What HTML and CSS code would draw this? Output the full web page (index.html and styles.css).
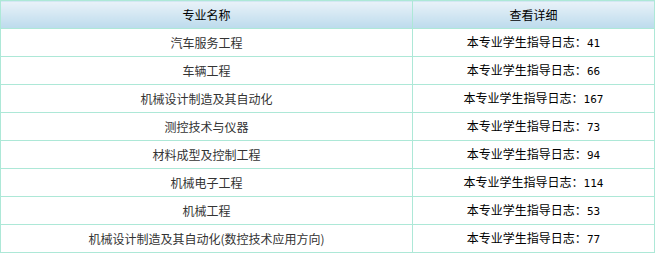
FILE: index.html
```html
<!DOCTYPE html>
<html lang="zh-CN">
<head>
<meta charset="utf-8">
<title>专业指导日志</title>
<link rel="stylesheet" href="styles.css">
</head>
<body>
<table class="grid">
  <colgroup><col class="c-name"><col class="c-detail"></colgroup>
  <thead>
    <tr><th>专业名称</th><th>查看详细</th></tr>
  </thead>
  <tbody>
    <tr><td class="name">汽车服务工程</td><td class="detail">本专业学生指导日志：<span class="num">41</span></td></tr>
    <tr><td class="name">车辆工程</td><td class="detail">本专业学生指导日志：<span class="num">66</span></td></tr>
    <tr><td class="name">机械设计制造及其自动化</td><td class="detail">本专业学生指导日志：<span class="num">167</span></td></tr>
    <tr><td class="name">测控技术与仪器</td><td class="detail">本专业学生指导日志：<span class="num">73</span></td></tr>
    <tr><td class="name">材料成型及控制工程</td><td class="detail">本专业学生指导日志：<span class="num">94</span></td></tr>
    <tr><td class="name">机械电子工程</td><td class="detail">本专业学生指导日志：<span class="num">114</span></td></tr>
    <tr><td class="name">机械工程</td><td class="detail">本专业学生指导日志：<span class="num">53</span></td></tr>
    <tr><td class="name">机械设计制造及其自动化(数控技术应用方向)</td><td class="detail">本专业学生指导日志：<span class="num">77</span></td></tr>
  </tbody>
</table>
</body>
</html>
```

FILE: styles.css
```css
html, body {
  margin: 0;
  padding: 0;
  background: #ffffff;
}

.grid {
  border-collapse: collapse;
  table-layout: fixed;
  width: 654px;
  font-family: "Noto Sans CJK SC", "Noto Sans", sans-serif;
  font-size: 12px;
}

.c-name { width: 412px; }
.c-detail { width: 242px; }

.grid th,
.grid td {
  border: 1px solid #ade8d7;
  height: 27px;
  padding: 0;
  text-align: center;
  vertical-align: middle;
  line-height: 14px;
  white-space: nowrap;
}

.grid th {
  font-weight: normal;
  font-size: 12px;
  color: #000000;
  background: linear-gradient(#e9f2f9, #bcdbec);
}

.grid td.name {
  color: #333333;
  font-size: 12px;
}

.grid td.detail {
  color: #000000;
  font-size: 12px;
}

.num {
  font-family: "DejaVu Sans Mono", "Liberation Mono", monospace;
  font-size: 11px;
}
```
